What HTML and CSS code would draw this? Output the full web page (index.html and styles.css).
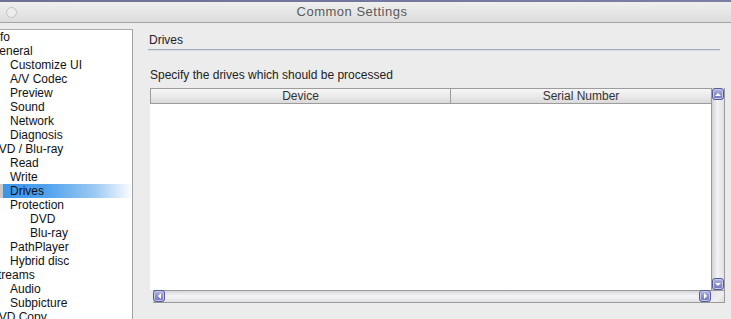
FILE: index.html
```html
<!DOCTYPE html>
<html lang="en">
<head>
  <meta charset="UTF-8" />
  <title>Common Settings</title>
  <link rel="stylesheet" href="styles.css">
</head>
<body>

  <div class="backdrop"></div>
  <header class="titlebar">
    <span class="close"></span>
    <h1 class="title">Common Settings</h1>
  </header>

  <div class="main">
    <ul class="tree">
      <li class="lvl0">Info</li>
      <li class="lvl0">General</li>
      <li class="lvl1">Customize UI</li>
      <li class="lvl1">A/V Codec</li>
      <li class="lvl1">Preview</li>
      <li class="lvl1">Sound</li>
      <li class="lvl1">Network</li>
      <li class="lvl1">Diagnosis</li>
      <li class="lvl0">DVD / Blu-ray</li>
      <li class="lvl1">Read</li>
      <li class="lvl1">Write</li>
      <li class="lvl1 selected">Drives</li>
      <li class="lvl1">Protection</li>
      <li class="lvl2">DVD</li>
      <li class="lvl2">Blu-ray</li>
      <li class="lvl1">PathPlayer</li>
      <li class="lvl1">Hybrid disc</li>
      <li class="lvl0">Streams</li>
      <li class="lvl1">Audio</li>
      <li class="lvl1">Subpicture</li>
      <li class="lvl0">DVD Copy</li>
    </ul>

    <section class="pane">
      <h2 class="pane-title">Drives</h2>
      <p class="hint">Specify the drives which should be processed</p>

      <div class="table">
        <div class="table-head">
          <div class="th device">Device</div>
          <div class="th">Serial Number</div>
        </div>
        <div class="vscroll">
          <span class="sbtn up"></span>
          <span class="sbtn down"></span>
        </div>
        <div class="table-body"></div>
        <div class="hscroll">
          <span class="sbtn left"></span>
          <span class="sbtn right"></span>
        </div>
        <div class="corner"></div>
      </div>
    </section>
  </div>

</body>
</html>
```

FILE: styles.css
```css
body {
  font-family: 'Liberation Sans', Arial, sans-serif;
  font-size: 12px;
  background: #ececec;
  color: #111;
  margin: 0;
  width: 731px;
  height: 319px;
  overflow: hidden;
}
.backdrop {
  height: 2px;
  background: linear-gradient(90deg, #6d7196 0%, #7b7fa6 100%);
}
.titlebar {
  height: 20px;
  display: flex;
  align-items: center;
  padding-left: 6px;
  background: linear-gradient(180deg, #efefef 0%, #e6e6e6 50%, #dcdcdc 100%);
  border-bottom: 1px solid #a4a4a4;
}
.close {
  width: 9px;
  height: 9px;
  border: 1px solid #c2c2c2;
  border-radius: 50%;
  background: #ececec;
}
.title {
  flex: 1;
  margin: 0;
  padding-right: 44px;
  text-align: center;
  font-size: 13px;
  font-weight: 400;
  letter-spacing: 0.5px;
  color: #5a5a5a;
  line-height: 20px;
}
.main {
  display: flex;
  padding-top: 6px;
  height: 290px;
}
.tree {
  list-style: none;
  margin: 0;
  padding: 0;
  width: 132px;
  flex-shrink: 0;
  background: #fff;
  border-top: 1px solid #a8a8a8;
  border-right: 1px solid #a0a0a0;
  overflow: hidden;
  line-height: 14px;
}
.tree li {
  white-space: nowrap;
  height: 14px;
}
.tree .lvl0 { text-indent: -10px; }
.tree .lvl1 { padding-left: 10px; }
.tree .lvl2 { padding-left: 30px; }
.tree .selected {
  background: linear-gradient(90deg, #c9c9c9 0, #c9c9c9 3px, #3994ec 3px, #4fa2ee 35%, #9ccaf3 72%, #f4f9fe 98%, #ffffff 100%);
}
.pane {
  flex: 1;
  padding: 4px 6px 0 15px;
}
.pane-title {
  margin: 0 5px 0 0;
  padding: 0 0 2px 1px;
  font-size: 12px;
  font-weight: 400;
  line-height: 14px;
  color: #222;
  border-bottom: 1px solid #a3a9be;
  box-shadow: 0 1px 0 #dadde6;
}
.hint {
  margin: 18px 0 0;
  padding-left: 2px;
  line-height: 14px;
  color: #222;
}
.table {
  margin: 6px 0 0 2px;
  display: grid;
  grid-template-columns: 1fr 14px;
  grid-template-rows: 16px 186px 13px;
}
.table-head {
  grid-column: 1;
  grid-row: 1;
  display: flex;
  border-top: 1px solid #9c9c9c;
  border-bottom: 1px solid #9c9c9c;
  border-left: 1px solid #9c9c9c;
  background: linear-gradient(180deg, #f6f6f6 0%, #e9e9e9 55%, #dadada 100%);
}
.th {
  flex: 1;
  text-align: center;
  line-height: 14px;
  color: #333;
}
.th.device {
  flex: 0 0 299px;
  border-right: 1px solid #9c9c9c;
}
.table-body {
  grid-column: 1;
  grid-row: 2;
  background: #fff;
}
.vscroll {
  grid-column: 2;
  grid-row: 1 / 3;
  display: flex;
  flex-direction: column;
  justify-content: space-between;
  border-left: 1px solid #9a9a9a;
  border-right: 1px solid #9a9a9a;
  background: linear-gradient(90deg, #d2d2d8 0%, #f3f3f5 45%, #e2e2e6 100%);
}
.hscroll {
  grid-column: 1;
  grid-row: 3;
  display: flex;
  justify-content: space-between;
  margin-left: 3px;
  border-top: 1px solid #9a9a9a;
  border-bottom: 1px solid #9a9a9a;
  background: linear-gradient(180deg, #d6d6dc 0%, #f5f5f7 45%, #e0e0e4 100%);
}
.corner {
  grid-column: 2;
  grid-row: 3;
  border-top: 1px solid #9a9a9a;
  border-right: 1px solid #9a9a9a;
  border-bottom: 1px solid #9a9a9a;
  background: linear-gradient(135deg, #e4e4e4 0%, #eeeeee 60%, #dcdcdc 100%);
}
.sbtn {
  width: 10px;
  height: 10px;
  border: 1px solid #53599a;
  border-radius: 3px;
  background: linear-gradient(180deg, #b6b9e0 0%, #8c91c9 50%, #7278b8 100%);
  box-shadow: inset 0 0 0 1px #c4c7ea;
  display: flex;
  align-items: center;
  justify-content: center;
}
.sbtn::after {
  content: '';
  width: 0;
  height: 0;
}
.sbtn.up::after {
  border-left: 3px solid transparent;
  border-right: 3px solid transparent;
  border-bottom: 3px solid #fff;
}
.sbtn.down::after {
  border-left: 3px solid transparent;
  border-right: 3px solid transparent;
  border-top: 3px solid #fff;
}
.sbtn.left::after {
  border-top: 3px solid transparent;
  border-bottom: 3px solid transparent;
  border-right: 3px solid #fff;
}
.sbtn.right::after {
  border-top: 3px solid transparent;
  border-bottom: 3px solid transparent;
  border-left: 3px solid #fff;
}
.vscroll .sbtn { margin: 0 0 0 0; }
.hscroll .sbtn { margin: -1px 0 0; }
```
